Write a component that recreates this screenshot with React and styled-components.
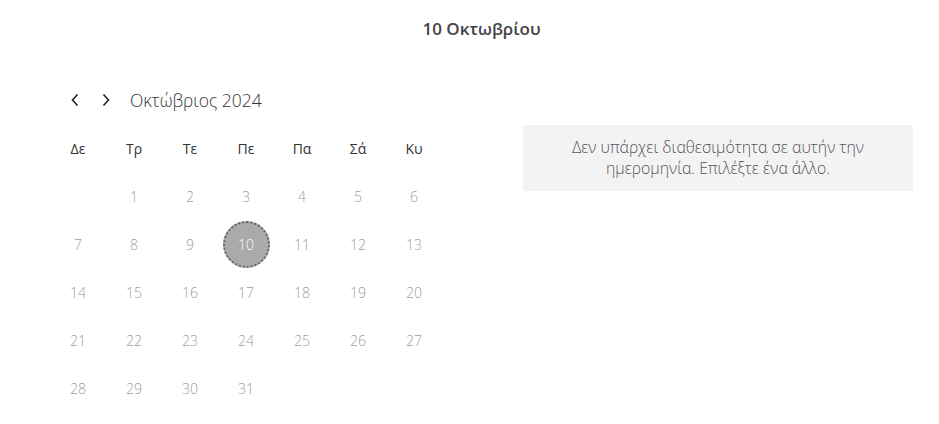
import * as React from "react";
import styled, { createGlobalStyle } from "styled-components";

const weekdays = ["Δε", "Τρ", "Τε", "Πε", "Πα", "Σά", "Κυ"];

// October 2024 starts on a Tuesday (Monday first)
const days = [null, ...Array.from({ length: 31 }, (_, i) => i + 1)];
const selectedDay = 10;

const GlobalStyle = createGlobalStyle`
    body {
        margin: 0;
        background: #fff;
        font-family: "Open Sans", "Noto Sans", sans-serif;
    }
`;

function Chevron({ dir }) {
    return (
        <svg width="10" height="14" viewBox="0 0 10 14">
            <path
                d={dir === "left" ? "M7.5 1.5 L2.5 7 L7.5 12.5" : "M2.5 1.5 L7.5 7 L2.5 12.5"}
                fill="none"
                stroke="#222"
                strokeWidth="1.6"
            />
        </svg>
    );
}

function App() {
    return (
        <Page>
            <GlobalStyle />
            <Title>10 Οκτωβρίου</Title>

            <Main>
                <Calendar>
                    <NavRow>
                        <NavButton aria-label="Προηγούμενος μήνας">
                            <Chevron dir="left" />
                        </NavButton>
                        <NavButton aria-label="Επόμενος μήνας">
                            <Chevron dir="right" />
                        </NavButton>
                        <MonthLabel>Οκτώβριος 2024</MonthLabel>
                    </NavRow>

                    <Grid>
                        {weekdays.map((w) => (
                            <Weekday key={w}>{w}</Weekday>
                        ))}
                        {days.map((d, i) => (
                            <DayCell key={i}>
                                {d && <Day $selected={d === selectedDay}>{d}</Day>}
                            </DayCell>
                        ))}
                    </Grid>
                </Calendar>

                <Notice>
                    Δεν υπάρχει διαθεσιμότητα σε αυτήν την ημερομηνία. Επιλέξτε ένα άλλο.
                </Notice>
            </Main>
        </Page>
    );
}

const Page = styled.div`
    width: 939px;
    height: 424px;
    overflow: hidden;
`;

const Title = styled.h1`
    margin: 0;
    padding: 18px 0 0 24px;
    text-align: center;
    font-size: 17px;
    line-height: 22px;
    font-weight: 600;
    color: #444;
`;

const Main = styled.div`
    display: flex;
    align-items: flex-start;
    gap: 81px;
    padding: 48px 0 0 50px;
`;

const Calendar = styled.div`
    width: 392px;
`;

const NavRow = styled.div`
    display: flex;
    align-items: center;
    height: 24px;
    padding-left: 18px;
`;

const NavButton = styled.button`
    display: flex;
    align-items: center;
    justify-content: center;
    width: 14px;
    height: 24px;
    padding: 0;
    margin-right: 17px;
    border: none;
    background: none;
    cursor: pointer;
`;

const MonthLabel = styled.span`
    font-size: 17.5px;
    font-weight: 300;
    color: #333;
`;

const Grid = styled.div`
    display: grid;
    grid-template-columns: repeat(7, 56px);
    grid-template-rows: 48px;
    grid-auto-rows: 48px;
    margin-top: 12px;
`;

const Weekday = styled.div`
    display: flex;
    align-items: center;
    justify-content: center;
    font-size: 14px;
    color: #333;
`;

const DayCell = styled.div`
    display: flex;
    align-items: center;
    justify-content: center;
`;

const Day = styled.span`
    display: flex;
    align-items: center;
    justify-content: center;
    box-sizing: border-box;
    width: 47px;
    height: 47px;
    border-radius: 50%;
    font-size: 14px;
    font-weight: 300;
    color: ${(p) => (p.$selected ? "#fff" : "#9e9e9e")};
    background: ${(p) => (p.$selected ? "#aaa" : "transparent")};
    border: ${(p) => (p.$selected ? "2px dotted #666" : "none")};
`;

const Notice = styled.div`
    box-sizing: border-box;
    width: 390px;
    margin-top: 37px;
    padding: 12px 40px;
    background: #f3f3f3;
    text-align: center;
    font-size: 15.8px;
    font-weight: 300;
    line-height: 21px;
    color: #555;
`;

export default App;
